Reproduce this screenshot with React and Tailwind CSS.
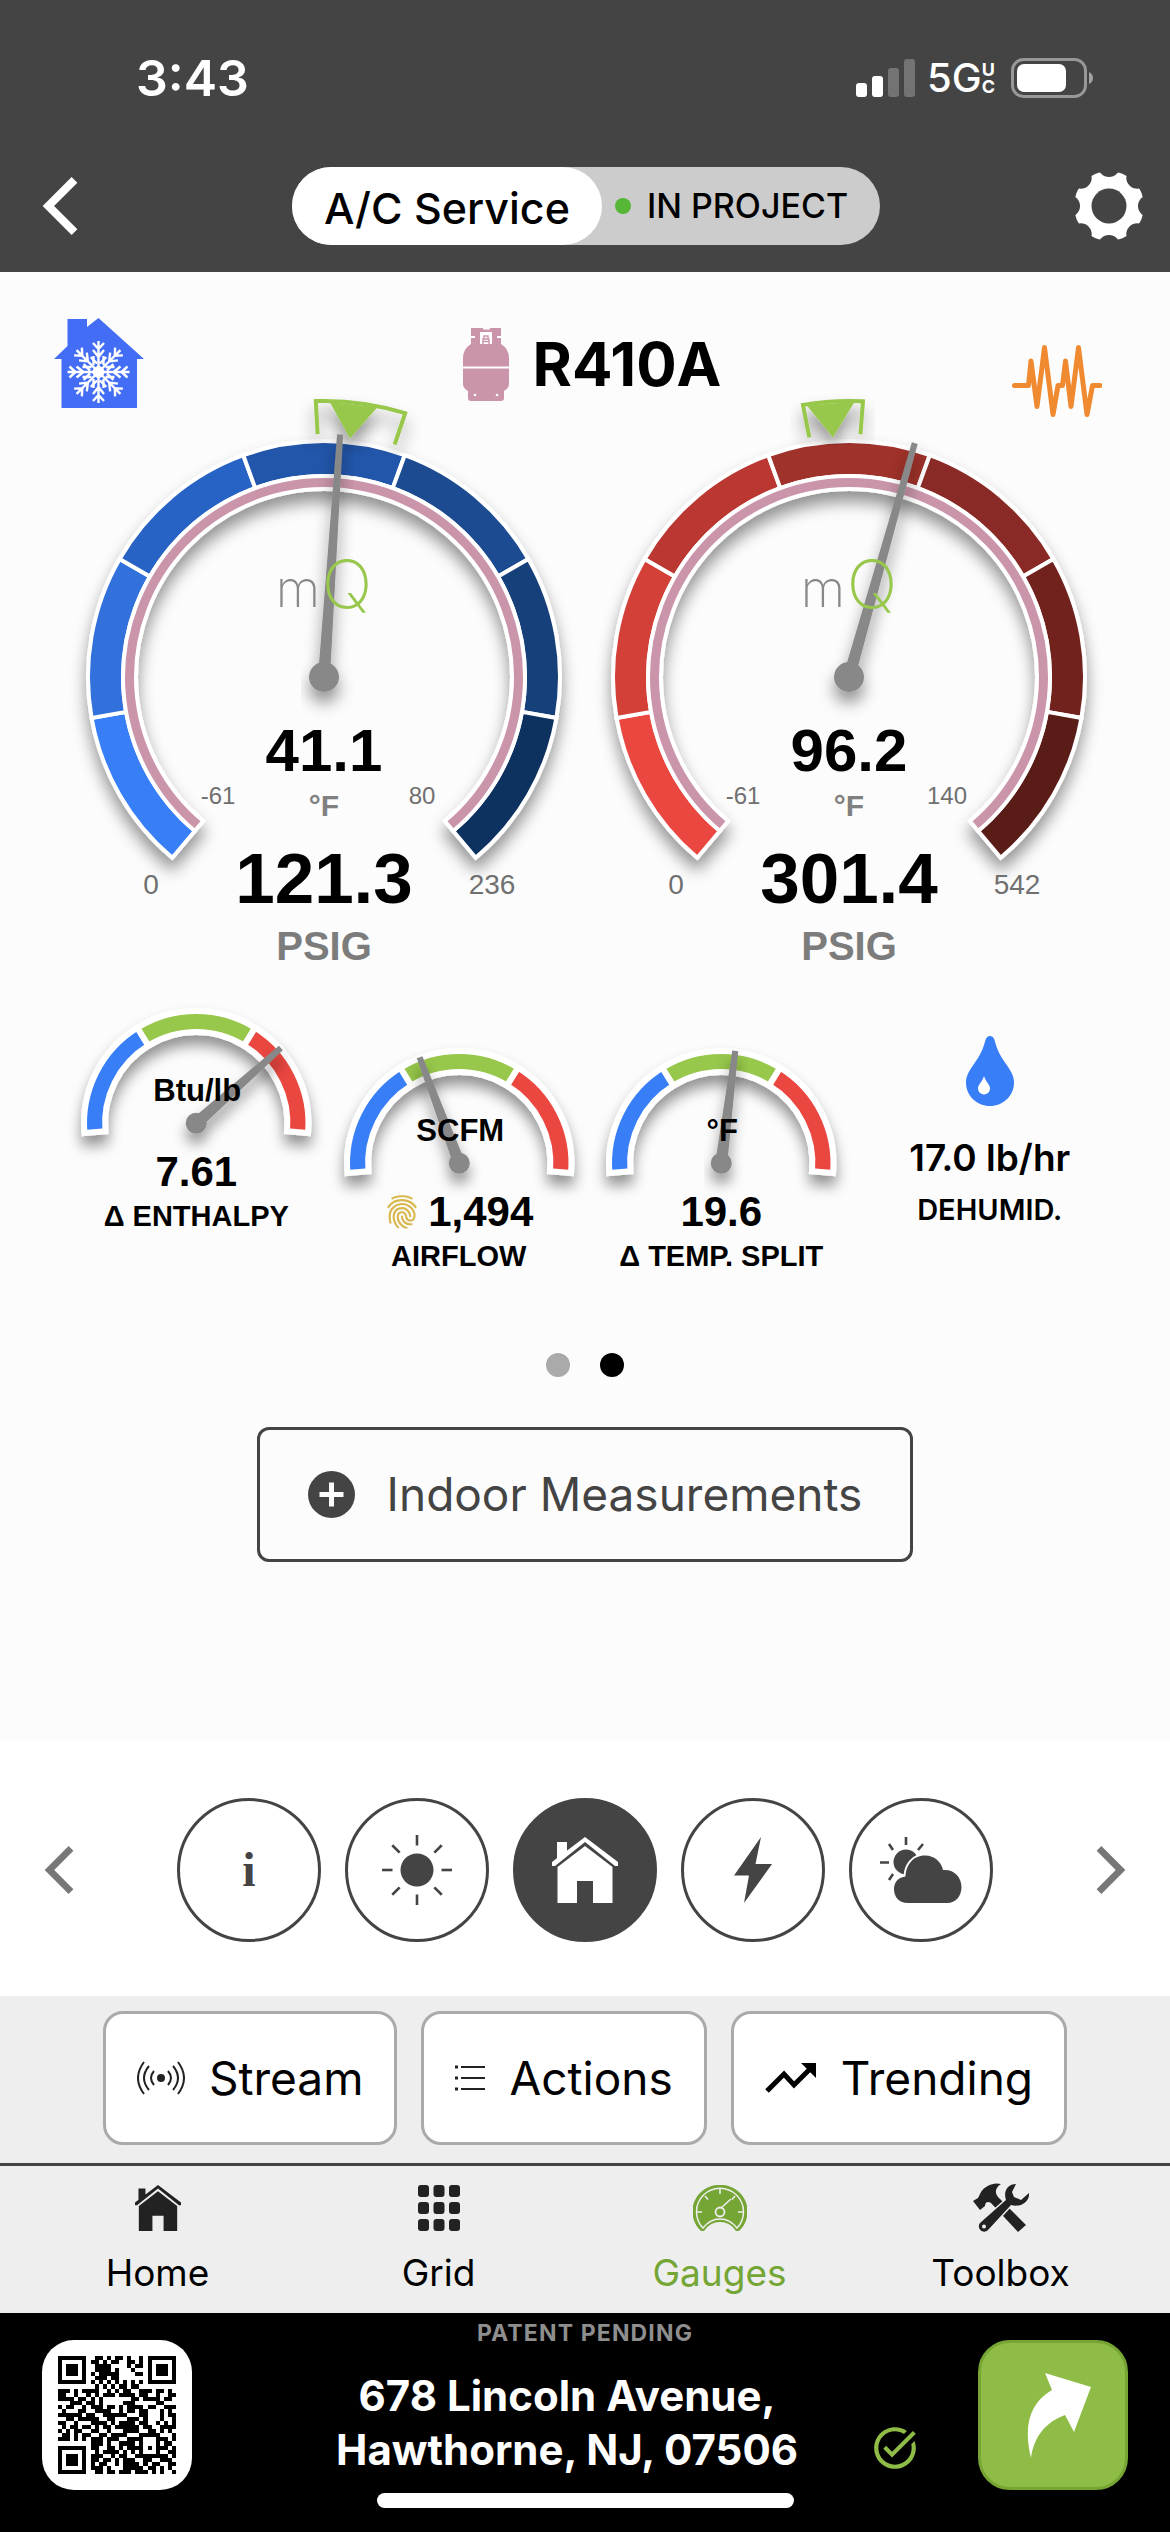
import { IoFingerPrint } from "react-icons/io5";
import { MdTaskAlt } from "react-icons/md";

const BLUES = ["#377ef7", "#306fdc", "#2863c4", "#2256aa", "#1d4b91", "#183f79", "#113260"];
const REDS = ["#ea463f", "#d23f38", "#bb3831", "#9f302c", "#8a2a26", "#71221e", "#5a1a17"];
const ZONES = ["#377ef7", "#97c74b", "#ea463f"];
const PINK = "#ca95aa";

// angle is measured clockwise from 12 o'clock
const polar = (cx, cy, r, deg) => {
  const a = (deg * Math.PI) / 180;
  return [cx + r * Math.sin(a), cy - r * Math.cos(a)];
};

const ringSegment = (cx, cy, outer, inner, from, to) => {
  const large = to - from > 180 ? 1 : 0;
  const [x1, y1] = polar(cx, cy, outer, from);
  const [x2, y2] = polar(cx, cy, outer, to);
  const [x3, y3] = polar(cx, cy, inner, to);
  const [x4, y4] = polar(cx, cy, inner, from);
  return `M${x1} ${y1}A${outer} ${outer} 0 ${large} 1 ${x2} ${y2}L${x3} ${y3}A${inner} ${inner} 0 ${large} 0 ${x4} ${y4}Z`;
};

const Needle = ({ cx, cy, length, angle, hub, tip, base }) => (
  <g fill="#888888">
    <path
      d={`M${cx - tip} ${cy - length}H${cx + tip}L${cx + base} ${cy}H${cx - base}Z`}
      transform={`rotate(${angle} ${cx} ${cy})`}
    />
    <circle cx={cx} cy={cy} r={hub} />
  </g>
);

const TargetBracket = ({ cx, cy, from, to }) => {
  const mid = (from + to) / 2 - (from + to > 0 ? 1.5 : 0.5);
  const [ax, ay] = polar(cx, cy, 243, from + 0.5);
  const [bx, by] = polar(cx, cy, 276, from + 0.3);
  const [dx, dy] = polar(cx, cy, 276, to - 0.3);
  const [ex, ey] = polar(cx, cy, 243, to - 0.5);
  const [t1x, t1y] = polar(cx, cy, 275, mid - 5);
  const [t2x, t2y] = polar(cx, cy, 275, mid + 5);
  const [t3x, t3y] = polar(cx, cy, 240, mid);
  return (
    <g>
      <path d={`M${ax} ${ay}L${bx} ${by}A276 276 0 0 1 ${dx} ${dy}L${ex} ${ey}`} fill="none" stroke="#97c74b" strokeWidth="4" />
      <path d={`M${t1x} ${t1y}L${t2x} ${t2y}L${t3x} ${t3y}Z`} fill="#97c74b" />
    </g>
  );
};

const PressureGauge = ({ id, colors, angle, bracket, temp, tempMax, pressure, pressureMax }) => {
  const cx = 262;
  const cy = 257;
  return (
    <svg viewBox="0 0 525 580" className="w-full overflow-visible" fontFamily="'Liberation Sans', Arial, sans-serif" textAnchor="middle">
      <defs>
        <filter id={id} x="-20%" y="-20%" width="140%" height="140%">
          <feDropShadow dx="0" dy="11" stdDeviation="8" floodColor="#000" floodOpacity="0.42" />
        </filter>
      </defs>
      <g filter={`url(#${id})`}>
        {colors.map((color, i) => (
          <path key={color} d={ringSegment(cx, cy, 236, 201, -140 + i * 40, -100 + i * 40)} fill={color} stroke="#fff" strokeWidth="4" />
        ))}
        <path d={ringSegment(cx, cy, 201, 188, -140, 140)} fill={PINK} stroke="#fff" strokeWidth="4" />
      </g>
      <g filter={`url(#${id})`}>
        <TargetBracket cx={cx} cy={cy} from={bracket[0]} to={bracket[1]} />
      </g>
      <g filter={`url(#${id})`}>
        <Needle cx={cx} cy={cy} length={243} angle={angle} hub={15} tip={3} base={6} />
      </g>
      <g fontFamily="Inter, sans-serif" fontWeight="200">
        <text x="236" y="187" fontSize="51" fill="#888888">m</text>
        <text x="285" y="188" fontSize="67" fill="#97c74b">Q</text>
      </g>
      <g fontWeight="700">
        <text x={cx} y="351" fontSize="60">{temp}</text>
        <text x={cx} y="396" fontSize="30" fill="#808080">°F</text>
        <text x={cx} y="483" fontSize="71">{pressure}</text>
        <text x={cx} y="540" fontSize="40" fill="#7c7c7c">PSIG</text>
      </g>
      <g fill="#707070">
        <text x={cx - 106} y="384" fontSize="24">-61</text>
        <text x={cx + 98} y="384" fontSize="24">{tempMax}</text>
        <text x={cx - 173} y="474" fontSize="28">0</text>
        <text x={cx + 168} y="474" fontSize="28">{pressureMax}</text>
      </g>
    </svg>
  );
};

const SmallGauge = ({ id, unit, angle, value, label, icon, className = "" }) => {
  const cx = 131;
  const cy = 123;
  return (
    <div className={`flex flex-col items-center font-['Liberation_Sans',Arial,sans-serif] font-bold text-black ${className}`}>
      <svg viewBox="0 0 262 140" className="w-full overflow-visible">
        <defs>
          <filter id={id} x="-20%" y="-20%" width="140%" height="150%">
            <feDropShadow dx="0" dy="10" stdDeviation="7" floodColor="#000" floodOpacity="0.42" />
          </filter>
        </defs>
        <g filter={`url(#${id})`}>
          {ZONES.map((color, i) => (
            <path key={color} d={ringSegment(cx, cy, 112, 91, -95 + i * 63.33, -95 + (i + 1) * 63.33)} fill={color} stroke="#fff" strokeWidth="6" />
          ))}
        </g>
        <g filter={`url(#${id})`}>
          <Needle cx={cx} cy={cy} length={113} angle={angle} hub={10.5} tip={3} base={6} />
        </g>
        <text x={cx + 1} y="101" fontSize="31" textAnchor="middle">{unit}</text>
      </svg>
      <div className="mt-2 flex items-center gap-2 text-[42px] leading-[48px]">
        {icon}
        <span>{value}</span>
      </div>
      <div className="mt-1 text-[29px] leading-8 whitespace-nowrap">{label}</div>
    </div>
  );
};

const HouseCooling = () => (
  <svg width="90" height="90" viewBox="0 0 90 90">
    <path d="M44.500 0 90 41H83V90H7.500V41H0L13.500 28V1H33V9Z" fill="#436df5" />
    <g transform="translate(44.500 54)" stroke="#fff" strokeWidth="2.400" fill="none">
      {[0, 45, 90, 135, 180, 225, 270, 315].map((deg) => (
        <path key={deg} transform={`rotate(${deg})`} d="M0 0V-31M-5.500-29 0-23 5.500-29M-5.500-22 0-15 5.500-22M-5-7V-16M5-7V-16" />
      ))}
      <circle r="6" fill="#fff" stroke="none" />
    </g>
  </svg>
);

const Cylinder = () => (
  <svg width="46" height="73" viewBox="0 0 46 73">
    <path d="M8 0H20V1.500H27V0H38V16Q46 21 46 30V56Q46 60 41 63V70Q41 73 38 73H8Q5 73 5 70V63Q0 60 0 56V30Q0 21 8 16Z" fill={PINK} />
    <path d="M0 39.500H46M8 9H12M34 9H38" stroke="#fff" strokeWidth="2" />
    <path d="M17 4H29V16H17Z" fill="#fff" />
    <path d="M20 16V11H26V16M21 11V8H25V11M20 13.500H26" stroke={PINK} strokeWidth="1.400" fill="none" />
    <circle cx="12" cy="67" r="1.300" fill="#fff" />
    <circle cx="34" cy="67" r="1.300" fill="#fff" />
  </svg>
);

const Waveform = () => (
  <svg width="90" height="73" viewBox="0 0 90 73">
    <path
      d="M2.500 40.500H16.500L19 16 25 61.500 32.500 2.500 41 69.500 46 40.500H50.500L53.500 16 59 61.500 66.500 2.500 75 69.500 80.500 40.500H88"
      fill="none" stroke="#f08a30" strokeWidth="5" strokeLinecap="round" strokeLinejoin="round"
    />
  </svg>
);

const Gear = () => (
  <svg width="70" height="70" viewBox="0 0 70 70">
    <defs>
      <mask id="gear-mask">
        <circle cx="35" cy="35" r="35" fill="#fff" />
        <circle cx="35" cy="35" r="17.500" fill="#000" />
        {[0, 45, 90, 135, 180, 225, 270, 315].map((deg) => (
          <circle key={deg} cx="35" cy="-5" r="11" fill="#000" transform={`rotate(${deg} 35 35)`} />
        ))}
      </mask>
    </defs>
    <rect width="70" height="70" fill="#fff" mask="url(#gear-mask)" />
  </svg>
);

const House = ({ size, color }) => (
  <svg width={size} height={size} viewBox="0 0 66 66" fill={color}>
    <path d="M5 5H15V17L5 27ZM33 0 66 25V29L63 29 33 5 3 29 0 29V25Z" />
    <path d="M33 9 60.500 30V66H41V44H25V66H5.500V30Z" />
  </svg>
);

const Sun = () => (
  <svg width="72" height="72" viewBox="-36 -36 72 72">
    <circle r="16.500" fill="#444" />
    {[0, 45, 90, 135, 180, 225, 270, 315].map((deg) => (
      <path key={deg} d="M0-24.500V-35" stroke="#444" strokeWidth="2.600" transform={`rotate(${deg})`} />
    ))}
  </svg>
);

const Bolt = () => (
  <svg width="40" height="66" viewBox="0 0 40 66">
    <path d="M28 0 22.500 27H39L11 66 16 38.500H1Z" fill="#444" />
  </svg>
);

const CloudSun = () => (
  <svg width="82" height="66" viewBox="0 0 82 66">
    <circle cx="26" cy="25" r="12.500" fill="#444" />
    <path d="M26 0V8M9 7 13 13M43 7 38 13M0 25.500H9M9 43 13 37" stroke="#444" strokeWidth="2.600" />
    <path
      d="M28 66C19 66 14 60 14 52 14 45 19 40 25.500 39.500 26 28 33 18.500 45 18.500 55 18.500 61 25 63 33 74 32 81.500 40 81.500 50 81.500 59 76 66 67 66Z"
      fill="#444" stroke="#fff" strokeWidth="4" paintOrder="stroke"
    />
  </svg>
);

const Drop = () => (
  <svg width="48" height="70" viewBox="0 0 48 70">
    <path d="M19.500 4C21-1.300 27-1.300 28.500 4 31 14 35 21 40 28 45 35 48 40 48 46.500 48 60 37 70 24 70S0 60 0 46.500C0 40 3 35 8 28 13 21 17 14 19.500 4Z" fill="#377ef7" />
    <path d="M18 40C19.500 46 24 48 24 52.500A6 6 0 0 1 12 52.500C12 48 16.500 46 18 40Z" fill="#fff" />
  </svg>
);

const StreamIcon = () => (
  <svg width="48" height="34" viewBox="0 0 48 34" fill="none" stroke="#222" strokeWidth="2">
    <circle cx="24" cy="17" r="4" fill="#222" stroke="none" />
    <path d="M17 10Q11 17 17 24M12 5Q2 17 12 29M7 1Q-5 17 7 33M31 10Q37 17 31 24M36 5Q46 17 36 29M41 1Q53 17 41 33" />
  </svg>
);

const ListIcon = () => (
  <svg width="30" height="28" viewBox="0 0 30 28" stroke="#222" strokeWidth="2">
    <path d="M6 3H30M6 14H30M6 25H30" />
    <path d="M0 3H3M0 14H3M0 25H3" strokeWidth="3" />
  </svg>
);

const TrendIcon = () => (
  <svg width="52" height="32" viewBox="0 0 52 32">
    <path d="M2 29 19 12 29 23 46 6" fill="none" stroke="#000" strokeWidth="5" />
    <path d="M36 1H51V16Z" />
  </svg>
);

const GridIcon = () => (
  <svg width="42" height="46" viewBox="0 0 42 46" fill="#222">
    {[0, 15.5, 31].map((x) => [0, 17, 34].map((y) => <rect key={`${x}-${y}`} x={x} y={y} width="11" height="12" rx="3" />))}
  </svg>
);

const GaugeIcon = () => (
  <svg width="54" height="46" viewBox="0 0 54 46">
    <path d="M27 0A26.500 26.500 0 0 1 46 46H43Q37 37 27 37T11 46H8A26.500 26.500 0 0 1 27 0Z" fill="#74a535" />
    <path d="M10 43A23.500 23.500 0 1 1 44 43Q37 34 27 34T10 43Z" fill="none" stroke="#eee" strokeWidth="1.500" />
    <path d="M27 4V9M12 11 15 14.500M42 11 39 14.500M4 27H9M50 27H45M28 23 38 14" stroke="#eee" strokeWidth="1.600" />
    <circle cx="27" cy="27" r="4.500" fill="none" stroke="#eee" strokeWidth="1.800" />
  </svg>
);

const ToolsIcon = () => (
  <svg width="58" height="49" viewBox="0 0 58 49">
    <path d="M29 1C21-1 13 3 9 9L6 15 1 18 8 27 13 23C13 19 16 18 19 20L46 49 54 42 26 14C22 9 24 4 29 1Z" fill="#222" />
    <path
      d="M44 1C36 1 31 8 34 17L8 40C4 45 11 52 16 47L39 22C48 25 58 19 57 10L49 17 42 14 40 9Z"
      fill="#222" stroke="#eee" strokeWidth="3" paintOrder="stroke"
    />
    <circle cx="12" cy="43.500" r="2" fill="#eee" />
  </svg>
);

const Chevron = ({ width, height, color, flip }) => (
  <svg width={width} height={height} viewBox="0 0 30 50" fill="none" stroke={color} strokeWidth="7" className={flip ? "rotate-180" : ""}>
    <path d="M27.500 2.500 5 25 27.500 47.500" />
  </svg>
);

const QR_ROWS = [
  "11111110011010110100101111111",
  "10000010110101100110101000001",
  "10111010011110000101101011101",
  "10111010011110100010001011101",
  "10111010101111100001101011101",
  "10000010011101100000001000001",
  "11111110101010101010101111111",
  "00000000010101011011000000000",
  "11101011110010101100111011010",
  "11001001010111011110110010011",
  "11110110101000000011011110110",
  "00011101101000001110000011000",
  "10110010111011010111101100111",
  "01000110011110010110110001010",
  "11111101100111111000110001011",
  "00110111110011000111010001001",
  "11001000111101011110110010101",
  "01011011010110111111011001111",
  "10101100110010001111001101010",
  "01101011001101111000111110001",
  "11101010111011100111100011101",
  "00000000111010011110100010110",
  "11111110110011010111101011101",
  "10000010010111101010100010011",
  "10111010111001011001111111101",
  "10111010110110101110011001110",
  "10111010101100101111010110011",
  "10000010111010001111101101010",
  "11111110011011011101110101001",
];

const QrCode = () => (
  <svg width="118" height="118" viewBox="0 0 29 29" shapeRendering="crispEdges">
    {QR_ROWS.map((row, y) => row.split("").map((c, x) => c === "1" && <rect key={`${x}-${y}`} x={x} y={y} width="1" height="1" />))}
  </svg>
);

const StatusBar = () => (
  <div className="flex h-[60px] items-center justify-between pr-[75px] pl-[136px] text-white">
    <span className="text-[50px] leading-[60px] font-semibold">3:43</span>
    <div className="flex items-center">
      <svg width="59" height="38" viewBox="0 0 59 38" fill="#fff">
        <rect x="0" y="24" width="11" height="14" rx="3" />
        <rect x="16" y="17" width="11" height="21" rx="3" />
        <rect x="32" y="9" width="11" height="29" rx="3" opacity="0.25" />
        <rect x="48" y="0" width="11" height="38" rx="3" opacity="0.25" />
      </svg>
      <span className="ml-3 text-[40px] leading-[60px] font-medium">5G</span>
      <span className="flex flex-col text-[18px] leading-[17px] font-bold">
        <span>U</span>
        <span>C</span>
      </span>
      <svg width="84" height="40" viewBox="0 0 84 40" className="ml-4">
        <rect x="1.500" y="1.500" width="73" height="37" rx="11" fill="none" stroke="#fff" strokeOpacity="0.450" strokeWidth="3" />
        <rect x="6" y="6" width="49" height="28" rx="7" fill="#fff" />
        <path d="M78 14Q82 16 82 20T78 26Z" fill="#fff" opacity="0.500" />
      </svg>
    </div>
  </div>
);

const Header = () => (
  <header className="bg-[#444] pt-12 pb-[27px]">
    <StatusBar />
    <div className="mt-[59px] flex h-[78px] items-center justify-between pr-[26px] pl-[42px]">
      <button aria-label="Back"><Chevron width={36} height={58} color="#fff" /></button>
      <div className="ml-5 flex h-full items-center rounded-full bg-[#ccc] text-black">
        <span className="flex h-full items-center rounded-full bg-white px-8 pt-1 text-[43px] leading-none font-medium">A/C Service</span>
        <span className="ml-[13px] size-4 rounded-full bg-[#55b735]" />
        <span className="pr-8 pl-4 text-[34px] leading-none font-medium">IN PROJECT</span>
      </div>
      <button aria-label="Settings"><Gear /></button>
    </div>
  </header>
);

const Screens = [
  { name: "Info", icon: <span className="font-['Liberation_Serif',serif] text-[48px] leading-none font-bold">i</span> },
  { name: "Outdoor", icon: <Sun /> },
  { name: "Indoor", icon: <House size={66} color="#fff" />, active: true },
  { name: "Power", icon: <Bolt /> },
  { name: "Weather", icon: <CloudSun /> },
];

const Actions = [
  { name: "Stream", icon: <StreamIcon /> },
  { name: "Actions", icon: <ListIcon /> },
  { name: "Trending", icon: <TrendIcon /> },
];

const Tabs = [
  { name: "Home", icon: <House size={46} color="#222" /> },
  { name: "Grid", icon: <GridIcon /> },
  { name: "Gauges", icon: <GaugeIcon />, active: true },
  { name: "Toolbox", icon: <ToolsIcon /> },
];

const App = () => {
  return (
    <div className="min-h-screen bg-white font-[Inter,sans-serif] text-black">
      <Header />

      <main className="bg-[#fcfcfc] pb-[178px]">
        <div className="grid h-[148px] grid-cols-[1fr_auto_1fr] items-start pr-10 pl-[54px]">
          <div className="pt-[46px]"><HouseCooling /></div>
          <div className="flex items-center gap-6 pt-[56px]">
            <Cylinder />
            <h1 className="text-[60px] leading-[73px] font-bold">R410A</h1>
          </div>
          <div className="flex justify-end pt-[73px] pr-7"><Waveform /></div>
        </div>

        <div className="grid grid-cols-2 pr-[58px] pl-[62px]">
          <PressureGauge id="low-side" colors={BLUES} angle={3.8} bracket={[-2, 17.4]} temp="41.1" tempMax="80" pressure="121.3" pressureMax="236" />
          <PressureGauge id="high-side" colors={REDS} angle={15.7} bracket={[-9.9, 3.2]} temp="96.2" tempMax="140" pressure="301.4" pressureMax="542" />
        </div>

        <div className="grid grid-cols-4 items-start pr-[55px] pl-[65px]">
          <SmallGauge id="enthalpy" unit="Btu/lb" angle={48.4} value="7.61" label="Δ ENTHALPY" />
          <SmallGauge
            id="airflow" unit="SCFM" angle={-20.5} value="1,494" label="AIRFLOW" className="mt-10"
            icon={<IoFingerPrint size={36} color="#d8b84e" />}
          />
          <SmallGauge id="split" unit="°F" angle={7.1} value="19.6" label="Δ TEMP. SPLIT" className="mt-10" />
          <div className="flex flex-col items-center pt-9 pl-3 font-semibold">
            <Drop />
            <div className="mt-7 text-[37px] leading-[48px] whitespace-nowrap">17.0 lb/hr</div>
            <div className="mt-2 text-[29px] leading-10">DEHUMID.</div>
          </div>
        </div>

        <div className="mt-[81px] flex justify-center gap-[30px]">
          <button aria-label="Page 1" className="size-6 rounded-full bg-[#aaa]" />
          <button aria-label="Page 2" className="size-6 rounded-full bg-black" />
        </div>

        <button className="mx-auto mt-[50px] flex h-[135px] items-center gap-8 rounded-xl border-3 border-[#444] px-12 text-[46px] text-[#444]">
          <svg width="47" height="47" viewBox="0 0 47 47">
            <circle cx="23.500" cy="23.500" r="23.500" fill="#444" />
            <path d="M23.500 11.500V35.500M11.500 23.500H35.500" stroke="#fcfcfc" strokeWidth="5" />
          </svg>
          Indoor Measurements
        </button>
      </main>

      <section className="flex items-center justify-between px-11 pt-[58px] pb-[54px]">
        <button aria-label="Previous"><Chevron width={30} height={48} color="#777" /></button>
        <div className="flex gap-6">
          {Screens.map((s) => (
            <button
              key={s.name}
              aria-label={s.name}
              className={`flex size-36 items-center justify-center rounded-full border-3 border-[#444] text-[#444] ${s.active ? "bg-[#444]" : "bg-white"}`}
            >
              {s.icon}
            </button>
          ))}
        </div>
        <button aria-label="Next"><Chevron width={30} height={48} color="#777" flip /></button>
      </section>

      <section className="flex justify-center gap-6 bg-[#eee] pt-[15px] pb-[18px]">
        {Actions.map((a) => (
          <button key={a.name} className="flex h-[134px] items-center gap-6 rounded-[20px] border-3 border-[#aaa] bg-white px-[31px] text-[46px]">
            {a.icon}
            {a.name}
          </button>
        ))}
      </section>

      <nav className="grid grid-cols-4 border-t-3 border-[#444] bg-[#eee] pt-[18px] pr-[29px] pb-[18px] pl-[17px]">
        {Tabs.map((t) => (
          <a key={t.name} href="#" className={`flex flex-col items-center ${t.active ? "text-[#74a535]" : "text-black"}`}>
            <span className="flex h-[47px] items-center">{t.icon}</span>
            <span className="mt-5 text-[37px] leading-[44px]">{t.name}</span>
          </a>
        ))}
      </nav>

      <footer className="grid grid-cols-[auto_1fr_auto] bg-black px-[42px] pb-6">
        <button aria-label="QR code" className="mt-[27px] flex size-[150px] items-center justify-center rounded-[32px] bg-white">
          <QrCode />
        </button>
        <div className="flex flex-col pt-2 text-white">
          <p className="text-center text-[23px] leading-6 font-bold tracking-wider text-[#8e8e8e]">PATENT PENDING</p>
          <div className="mt-6 flex items-end justify-end gap-[72px] pr-[58px]">
            <p className="text-center text-[42px] leading-[54px] font-bold">
              678 Lincoln Avenue,<br />Hawthorne, NJ, 07506
            </p>
            <MdTaskAlt size={50} color="#8fbc46" className="mb-1" />
          </div>
          <div className="mx-auto mt-4 h-[15px] w-[417px] rounded-full bg-white" />
        </div>
        <button aria-label="Share" className="mt-[27px] flex size-[150px] items-center justify-center rounded-[32px] border-3 border-[#76a534] bg-[#8fbc46] pl-4">
          <svg width="70" height="90" viewBox="0 0 70 90">
            <path d="M19 3 65 17 48 62 39 45C20 52 8 66 5 88-3 55 4 33 26 20Z" fill="#fff" />
          </svg>
        </button>
      </footer>
    </div>
  );
};

export default App;
